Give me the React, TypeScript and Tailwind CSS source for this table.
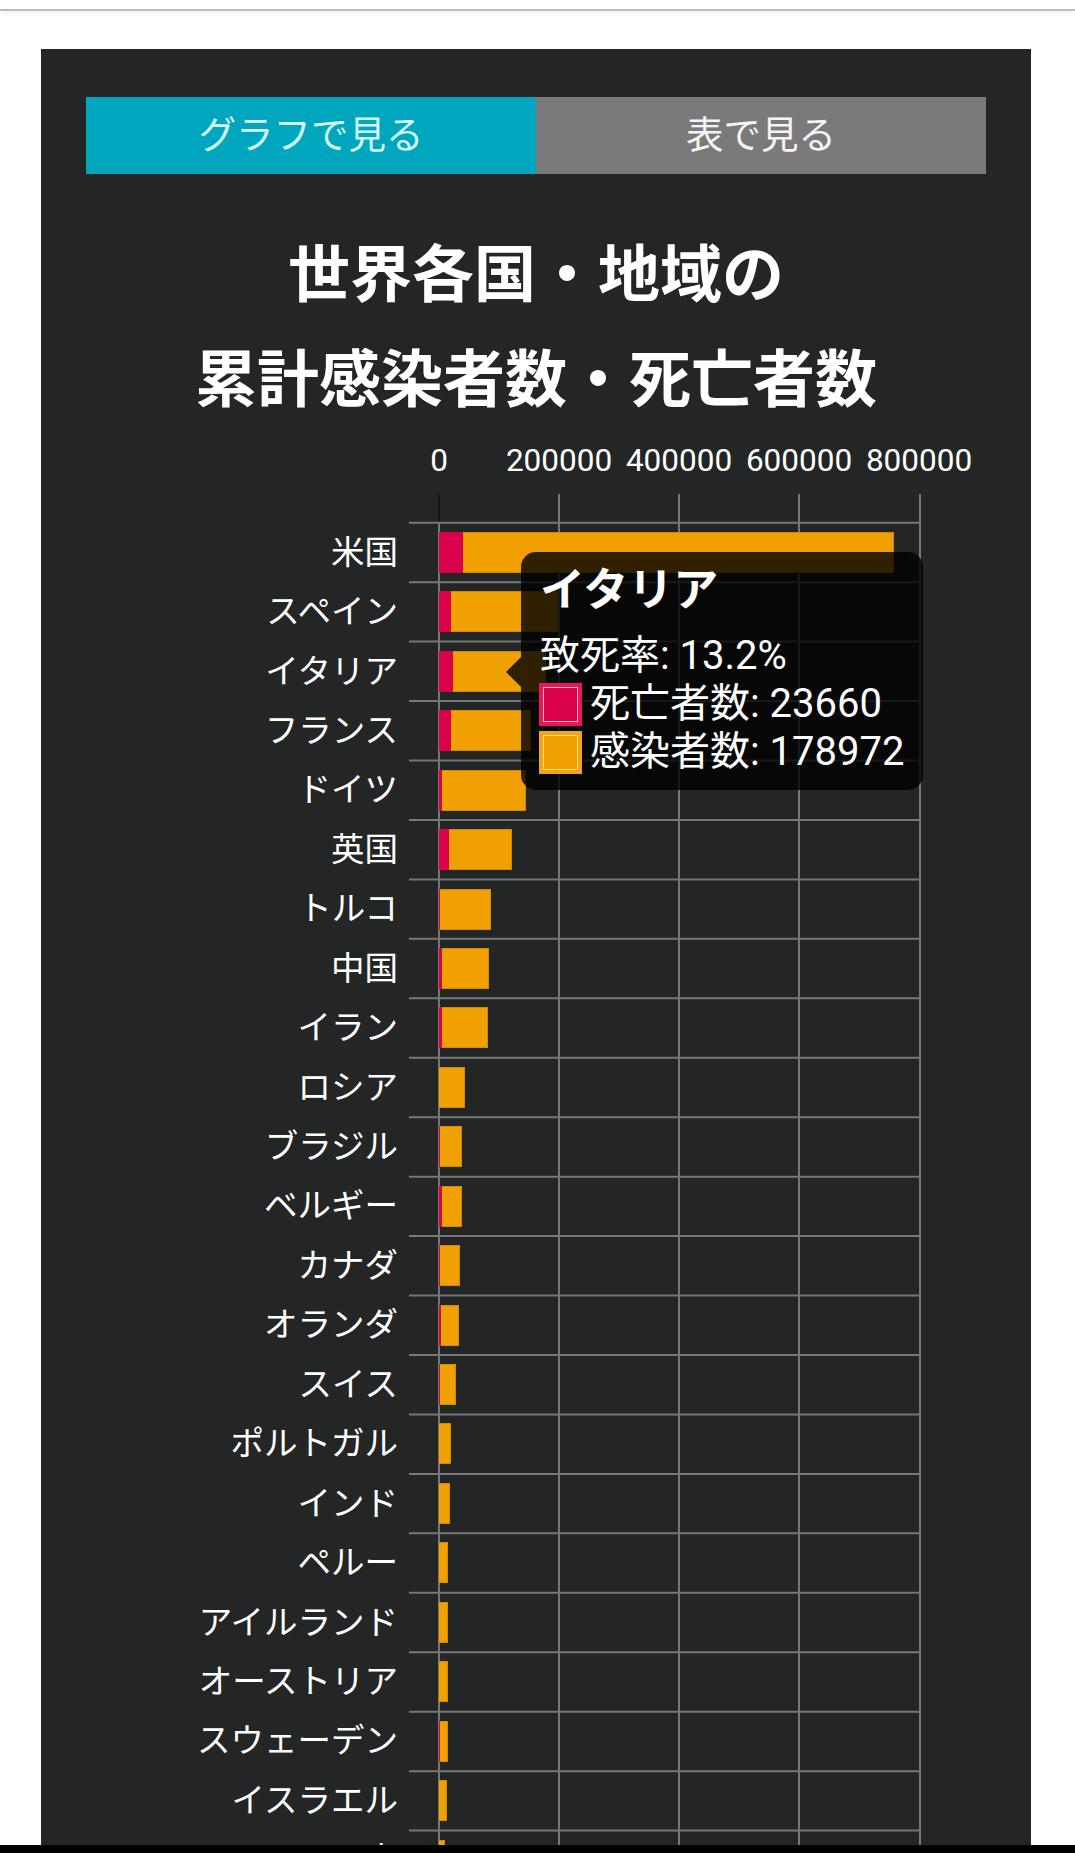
import React from 'react';

type Row = { name: string; cases: number; deaths: number };

const rows: Row[] = [
  { name: '米国', cases: 759086, deaths: 40661 },
  { name: 'スペイン', cases: 198674, deaths: 20453 },
  { name: 'イタリア', cases: 178972, deaths: 23660 },
  { name: 'フランス', cases: 154097, deaths: 19744 },
  { name: 'ドイツ', cases: 145184, deaths: 4586 },
  { name: '英国', cases: 121172, deaths: 16095 },
  { name: 'トルコ', cases: 86306, deaths: 2017 },
  { name: '中国', cases: 83805, deaths: 4636 },
  { name: 'イラン', cases: 82211, deaths: 5118 },
  { name: 'ロシア', cases: 42853, deaths: 361 },
  { name: 'ブラジル', cases: 38654, deaths: 2462 },
  { name: 'ベルギー', cases: 38496, deaths: 5683 },
  { name: 'カナダ', cases: 35056, deaths: 1587 },
  { name: 'オランダ', cases: 32838, deaths: 3697 },
  { name: 'スイス', cases: 27944, deaths: 1378 },
  { name: 'ポルトガル', cases: 20206, deaths: 714 },
  { name: 'インド', cases: 17615, deaths: 559 },
  { name: 'ペルー', cases: 15628, deaths: 400 },
  { name: 'アイルランド', cases: 15251, deaths: 610 },
  { name: 'オーストリア', cases: 14749, deaths: 470 },
  { name: 'スウェーデン', cases: 14385, deaths: 1540 },
  { name: 'イスラエル', cases: 13491, deaths: 172 },
  { name: '日本', cases: 10797, deaths: 236 },
];

// 120px per 200000
const PX = 120 / 200000;
const ROW_H = 59.45;
const FIRST_LINE = 41.7;
const ticks = ['0', '200000', '400000', '600000', '800000'];

function GridLines() {
  const height = FIRST_LINE + rows.length * ROW_H + 20;
  const xs = [353, 473, 593, 713, 834];
  return (
    <svg className="absolute left-0 top-0" width={899} height={height}>
      <line x1={353} y1={13} x2={353} y2={FIRST_LINE} stroke="#151717" strokeWidth={2} />
      {xs.map((x) => (
        <line key={x} x1={x} y1={x === 353 ? FIRST_LINE : 13} x2={x} y2={height} stroke="#777777" strokeWidth={2} />
      ))}
      {rows.map((_, i) => (
        <line key={i} x1={323} y1={FIRST_LINE + i * ROW_H} x2={835} y2={FIRST_LINE + i * ROW_H} stroke="#777777" strokeWidth={2} />
      ))}
      <line x1={323} y1={FIRST_LINE + rows.length * ROW_H} x2={835} y2={FIRST_LINE + rows.length * ROW_H} stroke="#777777" strokeWidth={2} />
    </svg>
  );
}

function Tooltip() {
  return (
    <div className="absolute left-[435px] top-[71px] z-10 w-[402px] h-[238px]">
      <svg className="absolute left-[-15px] top-[105px]" width={16} height={30}>
        <path d="M0 15 L15 0 L15 30 Z" fill="rgba(0,0,0,0.8)" />
      </svg>
      <div className="h-full rounded-[15px] bg-black/80 pl-[18px] pt-[17px] text-white">
        <div className="text-[45px] leading-[44px] font-bold pl-[1px]">イタリア</div>
        <div className="mt-[19px] text-[40px] leading-[48px]">
          <div className="pl-[1px]">致死率: 13.2%</div>
          <div className="flex items-center gap-[8px]">
            <div className="h-[43px] w-[43px] bg-[#e3195c] p-[4px]">
              <div className="h-full w-full border-[1.5px] border-[#ffbcd2] bg-[#d9004c]" />
            </div>
            <span>死亡者数: 23660</span>
          </div>
          <div className="flex items-center gap-[8px]">
            <div className="h-[43px] w-[43px] bg-[#f1a612] p-[4px]">
              <div className="h-full w-full border-[1.5px] border-[#ffe48a] bg-[#f0a000]" />
            </div>
            <span>感染者数: 178972</span>
          </div>
        </div>
      </div>
    </div>
  );
}

export default function App() {
  return (
    <div
      className="flex h-[1853px] w-[1075px] flex-col overflow-hidden bg-white"
      style={{ fontFamily: 'Roboto, "Noto Sans CJK JP", sans-serif' }}
    >
      <div className="h-[9px] shrink-0 bg-white" />
      <div className="h-[2px] shrink-0 bg-[#bdbdbd] shadow-[0_2px_5px_rgba(0,0,0,0.12)]" />
      <div className="flex min-h-0 flex-1 pt-[38px] pl-[41px]">
        <div className="w-[990px] overflow-hidden bg-[#232625] px-[45px] pt-[48px]">
          {/* tabs */}
          <div className="grid h-[77px] grid-cols-2 text-[37.5px]">
            <div className="flex items-center justify-center bg-[#00a6bd] text-[#d2f7f9]">グラフで見る</div>
            <div className="flex items-center justify-center bg-[#7a7a7a] text-[#f4f4f4]">表で見る</div>
          </div>

          {/* title */}
          <h1 className="mt-[48.5px] text-center text-[62px] font-bold leading-[105px] text-white">
            世界各国・地域の
            <br />
            累計感染者数・死亡者数
          </h1>

          {/* x axis */}
          <div className="mt-[8.5px] flex h-[40px] pl-[293px] text-[31.5px] leading-[40px] text-white">
            {ticks.map((t) => (
              <div key={t} className="w-[120px] text-center">
                {t}
              </div>
            ))}
          </div>

          {/* plot */}
          <div className="relative" style={{ paddingTop: FIRST_LINE }}>
            <GridLines />
            {rows.map((r) => (
              <div key={r.name} className="relative flex items-center" style={{ height: ROW_H }}>
                <div className="w-[312px] text-right text-[33.5px] leading-none text-white">{r.name}</div>
                <div className="ml-[41px] flex h-[41px]">
                  <div className="h-full bg-[#d9004c]" style={{ width: r.deaths * PX }} />
                  <div
                    className="h-full border border-l-0 border-[#d18c00] bg-[#f0a000]"
                    style={{ width: (r.cases - r.deaths) * PX }}
                  />
                </div>
              </div>
            ))}
            <Tooltip />
          </div>
        </div>
      </div>
      <div className="h-[8px] shrink-0 bg-black" />
    </div>
  );
}
